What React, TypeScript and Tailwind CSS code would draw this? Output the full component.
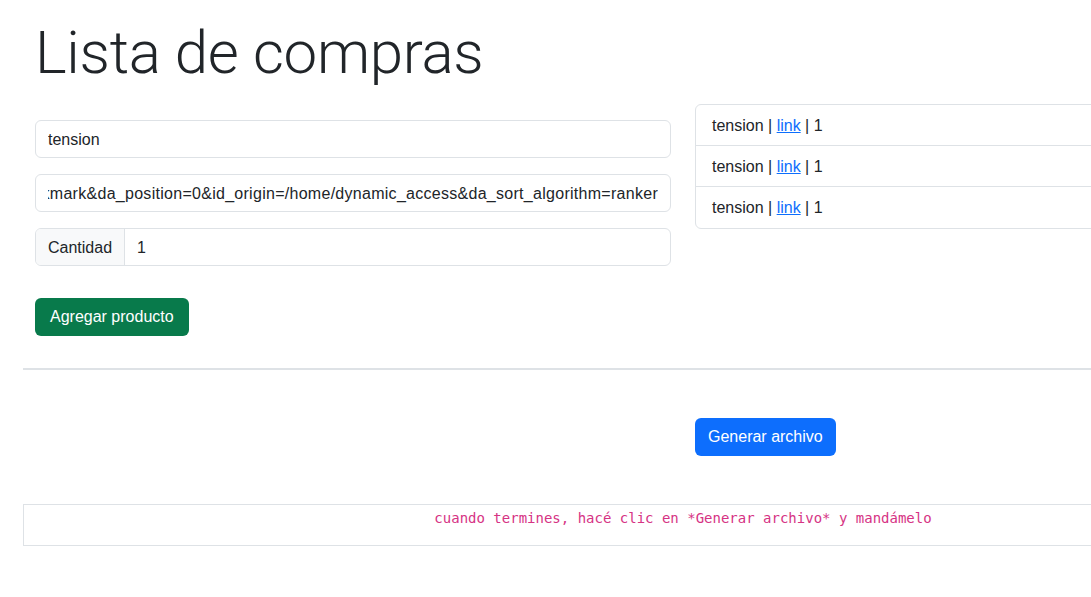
export default function App() {
  const items = [1, 2, 3];

  return (
    <div className="w-full overflow-hidden bg-white min-h-screen font-['Liberation_Sans',Arial,sans-serif] text-[16px] text-[#212529]">
      <div className="w-[1366px]">
        <div className="w-[1320px] mx-auto">
          <h1 className="px-3 mt-[17px] font-['Roboto',sans-serif] text-[60px] leading-[72px] font-light tracking-[-0.3px]">
            Lista de compras
          </h1>

          <div className="flex mt-[15px]">
            <div className="w-1/2 px-3 pt-4">
              <input
                className="block w-full h-[38px] px-3 pt-px border border-[#dee2e6] rounded-md outline-none"
                defaultValue="tension"
              />
              <div className="mt-4 w-full h-[38px] px-3 border border-[#dee2e6] rounded-md">
                <div className="h-full pt-px flex items-center justify-end overflow-hidden whitespace-nowrap">
                  <span className="shrink-0 tracking-[0.28px]">
                    polycard_client=bookmark&amp;da_position=0&amp;id_origin=/home/dynamic_access&amp;da_sort_algorithm=ranker
                  </span>
                </div>
              </div>
              <div className="mt-4 flex h-[38px] border border-[#dee2e6] rounded-md overflow-hidden">
                <span className="flex items-center px-3 pt-px bg-[#f8f9fa] border-r border-[#dee2e6]">
                  Cantidad
                </span>
                <input className="flex-1 px-3 pt-px outline-none" defaultValue="1" />
              </div>
              <button className="mt-8 h-[38px] px-[15px] rounded-md bg-[#087a4b] text-white">
                Agregar producto
              </button>
            </div>

            <div className="w-1/2 px-3">
              <ul className="border border-[#dee2e6] rounded-md">
                {items.map((i) => (
                  <li
                    key={i}
                    className="h-[41px] flex items-center px-4 pt-px border-b border-[#dee2e6] last:border-b-0"
                  >
                    tension |&nbsp;
                    <a href="#" className="text-[#0d6efd] underline">
                      link
                    </a>
                    &nbsp;| 1
                  </li>
                ))}
              </ul>
            </div>
          </div>

          <hr className="mt-8 border-t-2 border-[#dee2e6]" />

          <div className="flex mt-12">
            <div className="w-1/2 px-3" />
            <div className="w-1/2 px-3">
              <button className="h-[38px] px-[13px] rounded-md bg-[#0d6efd] text-white">
                Generar archivo
              </button>
            </div>
          </div>

          <div className="mt-12 h-[42px] border border-[#dee2e6] pt-[1px] text-center">
            <code className="font-['DejaVu_Sans_Mono',monospace] text-[14px] text-[#d63384]">
              cuando termines, hacé clic en *Generar archivo* y mandámelo
            </code>
          </div>
        </div>
      </div>
    </div>
  );
}
